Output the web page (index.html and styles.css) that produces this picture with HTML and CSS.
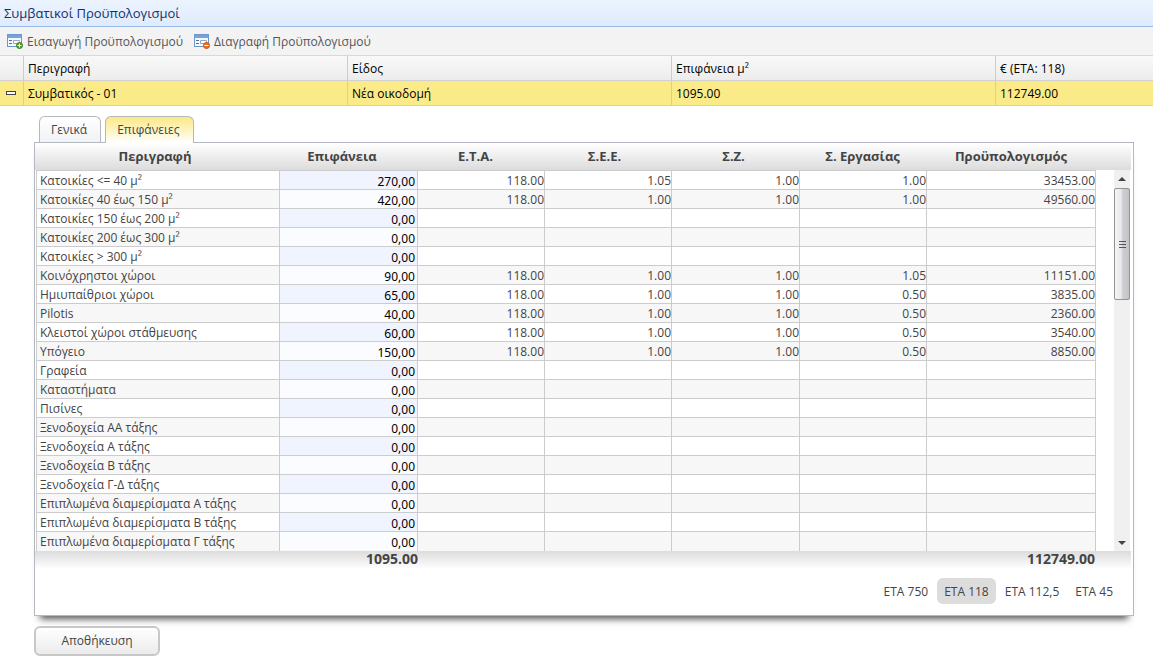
FILE: index.html
```html
<!DOCTYPE html>
<html lang="el">
<head>
<meta charset="utf-8">
<title>Συμβατικοί Προϋπολογισμοί</title>
<link rel="stylesheet" href="styles.css">
</head>
<body>
<h1 class="title">Συμβατικοί Προϋπολογισμοί</h1>
<div class="toolbar">
  <button class="tool" type="button">
    <svg class="tool-icon" width="16" height="16" viewBox="0 0 16 16"><rect x=".5" y=".5" width="14" height="12" fill="#f4f9ff" stroke="#6f97cc"/><rect x="1" y="1" width="13" height="3" fill="#73a3e0"/><path d="M2 6.500h3M2 9.500h3" stroke="#4f6f9c"/><path d="M6.500 6.500h6v3h-6z" fill="#fff" stroke="#9aa9bd"/><circle cx="12.500" cy="11.500" r="3" fill="#5a9e3c" stroke="#3d7a26"/><path d="M10.500 11.500h4M12.500 9.500v4" stroke="#fff"/></svg>
    Εισαγωγή Προϋπολογισμού</button>
  <button class="tool" type="button">
    <svg class="tool-icon" width="16" height="16" viewBox="0 0 16 16"><rect x=".5" y=".5" width="14" height="12" fill="#f4f9ff" stroke="#6f97cc"/><rect x="1" y="1" width="13" height="3" fill="#73a3e0"/><path d="M2 6.500h3M2 9.500h3" stroke="#4f6f9c"/><path d="M6.500 6.500h6v3h-6z" fill="#fff" stroke="#9aa9bd"/><circle cx="12.500" cy="11.500" r="3" fill="#f07020" stroke="#d2500c"/><path d="M10.500 11.500h4" stroke="#fff"/></svg>
    Διαγραφή Προϋπολογισμού</button>
</div>
<table class="budgets">
  <colgroup><col class="c-toggle"><col class="c-wide"><col class="c-wide"><col class="c-wide"><col></colgroup>
  <thead><tr><th></th><th>Περιγραφή</th><th>Είδος</th><th>Επιφάνεια μ²</th><th>€ (ΕΤΑ: 118)</th></tr></thead>
  <tbody><tr><td class="toggle-cell"><button class="toggle" type="button" aria-label="Σύμπτυξη"></button></td><td>Συμβατικός - 01</td><td>Νέα οικοδομή</td><td>1095.00</td><td>112749.00</td></tr></tbody>
</table>
<main class="detail">
  <div class="tabs" role="tablist">
    <button class="tab" type="button" role="tab" aria-selected="false">Γενικά</button>
    <button class="tab tab-active" type="button" role="tab" aria-selected="true">Επιφάνειες</button>
  </div>
  <section class="panel">
    <div class="head">
      <div class="h-name">Περιγραφή</div><div class="h-area">Επιφάνεια</div><div class="h-num">Ε.Τ.Α.</div><div class="h-num">Σ.Ε.Ε.</div><div class="h-num">Σ.Ζ.</div><div class="h-num">Σ. Εργασίας</div><div class="h-sum">Προϋπολογισμός</div>
    </div>
    <div class="viewport">
      <table class="areas">
        <colgroup><col><col class="c-area"><col class="c-num"><col class="c-num"><col class="c-mid"><col class="c-num"><col class="c-sum"></colgroup>
        <tbody>
        <tr><td>Κατοικίες &lt;= 40 μ²</td><td><input aria-label="Κατοικίες &lt;= 40 μ²" value="270,00"></td><td>118.00</td><td>1.05</td><td>1.00</td><td>1.00</td><td>33453.00</td></tr>
        <tr><td>Κατοικίες 40 έως 150 μ²</td><td><input aria-label="Κατοικίες 40 έως 150 μ²" value="420,00"></td><td>118.00</td><td>1.00</td><td>1.00</td><td>1.00</td><td>49560.00</td></tr>
        <tr><td>Κατοικίες 150 έως 200 μ²</td><td><input aria-label="Κατοικίες 150 έως 200 μ²" value="0,00"></td><td></td><td></td><td></td><td></td><td></td></tr>
        <tr><td>Κατοικίες 200 έως 300 μ²</td><td><input aria-label="Κατοικίες 200 έως 300 μ²" value="0,00"></td><td></td><td></td><td></td><td></td><td></td></tr>
        <tr><td>Κατοικίες &gt; 300 μ²</td><td><input aria-label="Κατοικίες &gt; 300 μ²" value="0,00"></td><td></td><td></td><td></td><td></td><td></td></tr>
        <tr><td>Κοινόχρηστοι χώροι</td><td><input aria-label="Κοινόχρηστοι χώροι" value="90,00"></td><td>118.00</td><td>1.00</td><td>1.00</td><td>1.05</td><td>11151.00</td></tr>
        <tr><td>Ημιυπαίθριοι χώροι</td><td><input aria-label="Ημιυπαίθριοι χώροι" value="65,00"></td><td>118.00</td><td>1.00</td><td>1.00</td><td>0.50</td><td>3835.00</td></tr>
        <tr><td>Pilotis</td><td><input aria-label="Pilotis" value="40,00"></td><td>118.00</td><td>1.00</td><td>1.00</td><td>0.50</td><td>2360.00</td></tr>
        <tr><td>Κλειστοί χώροι στάθμευσης</td><td><input aria-label="Κλειστοί χώροι στάθμευσης" value="60,00"></td><td>118.00</td><td>1.00</td><td>1.00</td><td>0.50</td><td>3540.00</td></tr>
        <tr><td>Υπόγειο</td><td><input aria-label="Υπόγειο" value="150,00"></td><td>118.00</td><td>1.00</td><td>1.00</td><td>0.50</td><td>8850.00</td></tr>
        <tr><td>Γραφεία</td><td><input aria-label="Γραφεία" value="0,00"></td><td></td><td></td><td></td><td></td><td></td></tr>
        <tr><td>Καταστήματα</td><td><input aria-label="Καταστήματα" value="0,00"></td><td></td><td></td><td></td><td></td><td></td></tr>
        <tr><td>Πισίνες</td><td><input aria-label="Πισίνες" value="0,00"></td><td></td><td></td><td></td><td></td><td></td></tr>
        <tr><td>Ξενοδοχεία ΑΑ τάξης</td><td><input aria-label="Ξενοδοχεία ΑΑ τάξης" value="0,00"></td><td></td><td></td><td></td><td></td><td></td></tr>
        <tr><td>Ξενοδοχεία Α τάξης</td><td><input aria-label="Ξενοδοχεία Α τάξης" value="0,00"></td><td></td><td></td><td></td><td></td><td></td></tr>
        <tr><td>Ξενοδοχεία Β τάξης</td><td><input aria-label="Ξενοδοχεία Β τάξης" value="0,00"></td><td></td><td></td><td></td><td></td><td></td></tr>
        <tr><td>Ξενοδοχεία Γ-Δ τάξης</td><td><input aria-label="Ξενοδοχεία Γ-Δ τάξης" value="0,00"></td><td></td><td></td><td></td><td></td><td></td></tr>
        <tr><td>Επιπλωμένα διαμερίσματα Α τάξης</td><td><input aria-label="Επιπλωμένα διαμερίσματα Α τάξης" value="0,00"></td><td></td><td></td><td></td><td></td><td></td></tr>
        <tr><td>Επιπλωμένα διαμερίσματα Β τάξης</td><td><input aria-label="Επιπλωμένα διαμερίσματα Β τάξης" value="0,00"></td><td></td><td></td><td></td><td></td><td></td></tr>
        <tr class="last"><td>Επιπλωμένα διαμερίσματα Γ τάξης</td><td><input aria-label="Επιπλωμένα διαμερίσματα Γ τάξης" value="0,00"></td><td></td><td></td><td></td><td></td><td></td></tr>
        </tbody>
      </table>
      <div class="scrollbar">
        <svg class="arrow" width="16" height="18" viewBox="0 0 16 18"><path d="M4 11l4-4 4 4z" fill="#444"/></svg>
        <div class="thumb"><i></i><i></i><i></i></div>
        <svg class="arrow arrow-down" width="16" height="18" viewBox="0 0 16 18"><path d="M4 8l4 4 4-4z" fill="#444"/></svg>
      </div>
    </div>
    <div class="totals"><output class="total-area">1095.00</output><output class="total-sum">112749.00</output></div>
    <div class="rates">
      <button class="rate" type="button">ΕΤΑ 750</button>
      <button class="rate rate-active" type="button">ΕΤΑ 118</button>
      <button class="rate" type="button">ΕΤΑ 112,5</button>
      <button class="rate" type="button">ΕΤΑ 45</button>
    </div>
  </section>
  <button class="save" type="button">Αποθήκευση</button>
</main>
</body>
</html>
```
FILE: styles.css
```css
* { box-sizing: border-box; }
body { margin: 0; background: #fff; color: #444; font: 12px/18px "Open Sans", sans-serif; }
button, input { font: inherit; color: inherit; margin: 0; }
button { cursor: pointer; }
table { border-collapse: separate; border-spacing: 0; table-layout: fixed; width: 100%; }

.title { margin: 0; height: 27px; padding: 4px; border-bottom: 1px solid #99bbe8; background: linear-gradient(#ecf3fe, #deebfe); color: #15306b; font-size: 13px; font-weight: 400; }
.toolbar { display: flex; gap: 11px; height: 29px; padding: 0 7px; border-bottom: 1px solid #d8d8d8; background: #f3f3f3; }
.tool { display: flex; align-items: center; gap: 4px; padding: 2px 0 0; border: 0; background: none; color: #555; }
.tool-icon { flex: none; }

.c-toggle { width: 24px; }
.c-wide { width: 324px; }
.budgets { color: #000; }
.budgets th, .budgets td { height: 25px; padding: 2px 4px 0; border-right: 1px solid #ccc; border-bottom: 1px solid #d0d0d0; font-weight: 400; text-align: left; }
.budgets th { background: linear-gradient(#f9f9f9, #ececec); }
.budgets td { background: #fbeb88; }
.budgets th:last-child, .budgets td:last-child { border-right: 0; }
.budgets .toggle-cell { padding: 0 0 0 6px; }
.toggle { display: block; width: 10px; height: 4px; padding: 0; border: 1px solid #444; background: #fff; }

.detail { padding: 10px 19px 9px 34px; }
.tabs { display: flex; gap: 4px; padding-left: 5px; }
.tab { height: 26px; padding: 0 13px 0 11px; border: 1px solid #b4b8c0; border-bottom: 0; border-radius: 6px 6px 0 0; background: linear-gradient(#fff, #f0f2f5); }
.tab-active { height: 27px; margin-bottom: -1px; padding: 0 14px 0 11px; background: linear-gradient(#fbe983, #fff); z-index: 1; }
.panel { border: 1px solid #b4b8c0; box-shadow: 0 9px 7px -6px #555; }
.head { display: flex; height: 27px; margin-right: 2px; padding: 0 36px 0 2px; background: linear-gradient(#fff, #dcdcdc); font-size: 13px; font-weight: 700; line-height: 27px; text-align: center; white-space: nowrap; }
.h-name { flex: 1; }
.h-area { width: 138px; }
.h-num { width: 129px; }
.h-sum { width: 168px; }
.viewport { display: flex; justify-content: space-between; padding: 0 3px 0 1px; }
.areas { flex: 1; margin-right: 18px; border-top: 1px solid #ccc; border-left: 1px solid #ccc; }
.c-area { width: 138px; }
.c-num { width: 127px; }
.c-mid { width: 128px; }
.c-sum { width: 169px; }
.areas td { height: 19px; padding: 2px 0 0; border-right: 1px solid #ccc; border-bottom: 1px solid #ccc; line-height: 16px; text-align: right; vertical-align: top; white-space: nowrap; }
.areas td:first-child { padding-left: 3px; text-align: left; }
.areas td:nth-child(2) { padding: 0; }
.areas tr:nth-child(even) td { background: #f7f7f7; }
.areas .last td { border-bottom: 0; }
.areas input { display: block; width: 100%; height: 18px; padding: 2px 2px 0; border: 0; outline: 0; background: #f0f4ff; color: #000; font-family: "Noto Sans", sans-serif; line-height: 16px; text-align: right; }
.areas tr:nth-child(even) input { background: #fafcff; }
.scrollbar { display: flex; flex-direction: column; width: 16px; background: #f0f0f0; }
.arrow { flex: none; }
.arrow-down { margin-top: auto; }
.thumb { display: flex; flex-direction: column; align-items: center; justify-content: center; gap: 1px; height: 112px; border: 1px solid #929292; border-radius: 2px; background: linear-gradient(to right, #f6f6f6, #e8e8ea 45%, #cfcfd3 55%, #c3c3c8); }
.thumb i { width: 7px; height: 2px; border-bottom: 1px solid #555; }
.totals { display: flex; justify-content: space-between; height: 18px; margin-right: 2px; padding: 0 36px 0 0; background: linear-gradient(#dcdcdc, #fff); font-size: 14px; font-weight: 700; line-height: 16px; }
.total-area { width: 383px; text-align: right; }
.rates { display: flex; justify-content: flex-end; gap: 2px; padding: 9px 13px 11px; }
.rate { height: 26px; padding: 1px 7px 0; border: 0; border-radius: 6px; background: none; }
.rate-active { background: #dcdcdc; }
.save { display: block; width: 126px; height: 30px; margin-top: 10px; border: 2px solid #c8c8c8; border-radius: 6px; background: linear-gradient(#fff, #ebebeb); }
```
